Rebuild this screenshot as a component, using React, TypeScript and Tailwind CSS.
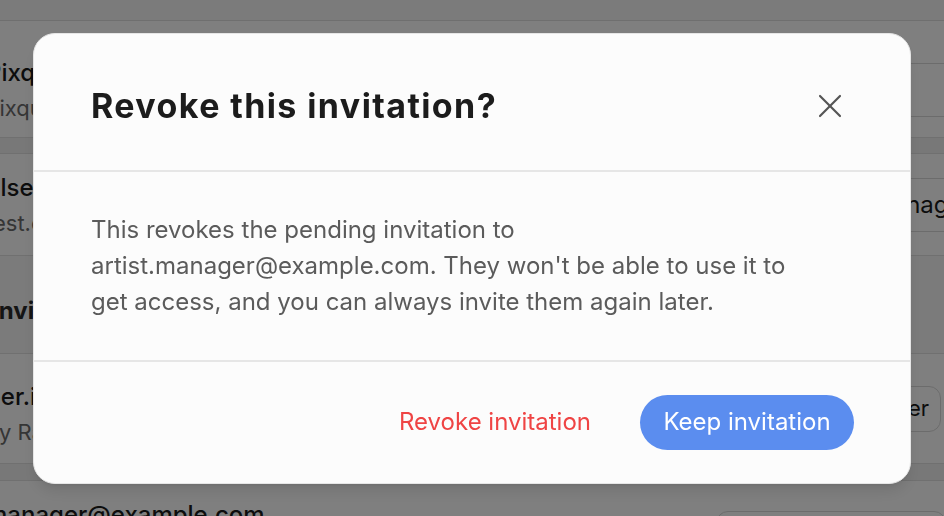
import { X } from "lucide-react";

type Row = { title: string; sub: string; action: string; pad: string };

const members: Row[] = [
  { title: "Pixquest Studio", sub: "pixquest@example.com", action: "You", pad: "pl-[20px]" },
  { title: "Else Marquardt", sub: "test.else@example.com", action: "Manage", pad: "pl-[44px]" },
];

const invites = [
  { title: "per.ingram@example.com", sub: "by Rafael Ortiz · Editor", action: "Remind member" },
  { title: "manager@example.com", sub: "by Rafael Ortiz · Viewer", action: "Remind member" },
];

function MemberRow({ row, className }: { row: Row; className: string }) {
  return (
    <div className={`flex items-center justify-between bg-white ${className}`}>
      <div className="flex flex-col gap-[8px]">
        <span className="text-[24px] leading-[28px] font-medium text-[#1a1a1a]">{row.title}</span>
        <span className="text-[22px] leading-[26px] text-[#6b6b6b]">{row.sub}</span>
      </div>
      <button
        className={`h-[54px] w-[160px] shrink-0 rounded-l-[12px] border border-r-0 border-[#d8d8d8] ${row.pad} text-left text-[24px] text-[#1a1a1a] whitespace-nowrap`}
      >
        {row.action}
      </button>
    </div>
  );
}

export default function App() {
  return (
    <div className="relative h-[516px] w-[944px] overflow-hidden bg-[#f6f6f6] font-['Inter','Liberation_Sans',sans-serif]">
      {/* Team settings page behind the dialog */}
      <div className="-ml-[14px] w-[1000px] pt-[20px]">
        <div className="border-t border-[#dedede]">
          <MemberRow row={members[0]} className="h-[117px] pt-[22px] border-b border-[#e0e0e0]" />
          <div className="h-[16px] border-b border-[#e0e0e0] bg-[#f0f0f0]" />
          <MemberRow row={members[1]} className="h-[102px] border-b border-[#e0e0e0]" />
          <div className="flex h-[98px] items-center border-b border-[#e0e0e0] bg-[#f6f6f6] pt-[12px] pl-[6px]">
            <span className="text-[24px] font-bold text-[#2a2a2a]">Invitations</span>
          </div>
          <div className="flex h-[110px] items-center justify-between border-b border-[#e0e0e0] bg-white pt-[10px]">
            <div className="flex flex-col gap-[8px]">
              <span className="text-[24px] leading-[28px] font-medium text-[#1a1a1a]">{invites[0].title}</span>
              <span className="text-[22px] leading-[26px] text-[#6b6b6b]">{invites[0].sub}</span>
            </div>
            <button className="mr-[45px] -mt-[10px] h-[46px] rounded-[12px] border border-[#d8d8d8] pl-[16px] pr-[11px] text-[22px] text-[#1a1a1a]">
              {invites[0].action}
            </button>
          </div>
          <div className="h-[17px] border-b border-[#e0e0e0] bg-[#f0f0f0]" />
          <div className="flex items-start justify-between bg-white pt-[20px]">
            <span className="text-[24px] leading-[28px] font-medium text-[#1a1a1a]">{invites[1].title}</span>
            <button className="mt-[10px] mr-[40px] h-[46px] w-[230px] rounded-[12px] border border-[#d8d8d8] text-[22px]">
              {invites[1].action}
            </button>
          </div>
        </div>
      </div>

      {/* Overlay + dialog */}
      <div className="fixed inset-0 flex items-center justify-center bg-black/50">
        <div className="w-[878px] overflow-hidden rounded-[22px] border border-[#e6e6e6] bg-[#fcfcfc] shadow-lg">
          <div className="flex h-[138px] items-center justify-between border-b-2 border-[#e6e6e6] pt-[8px] pl-[57px] pr-[60px]">
            <h2 className="text-[34px] font-bold tracking-[1.4px] text-[#1c1c1c]">Revoke this invitation?</h2>
            <X size={40} strokeWidth={1.3} className="text-[#555555]" />
          </div>
          <div className="border-b-2 border-[#e6e6e6] px-[57px] py-[40px]">
            <p className="text-[24px] leading-[36px] text-[#5b5b5b]">
              This revokes the pending invitation to
              <br />
              artist.manager@example.com. They won't be able to use it to
              <br />
              get access, and you can always invite them again later.
            </p>
          </div>
          <div className="flex h-[121px] items-center justify-end gap-[25px] pr-[56px]">
            <button className="px-[24px] text-[24px] text-[#ef4444]">Revoke invitation</button>
            <button className="h-[55px] w-[214px] rounded-full bg-[#5b8def] text-[24px] text-white">
              Keep invitation
            </button>
          </div>
        </div>
      </div>
    </div>
  );
}
